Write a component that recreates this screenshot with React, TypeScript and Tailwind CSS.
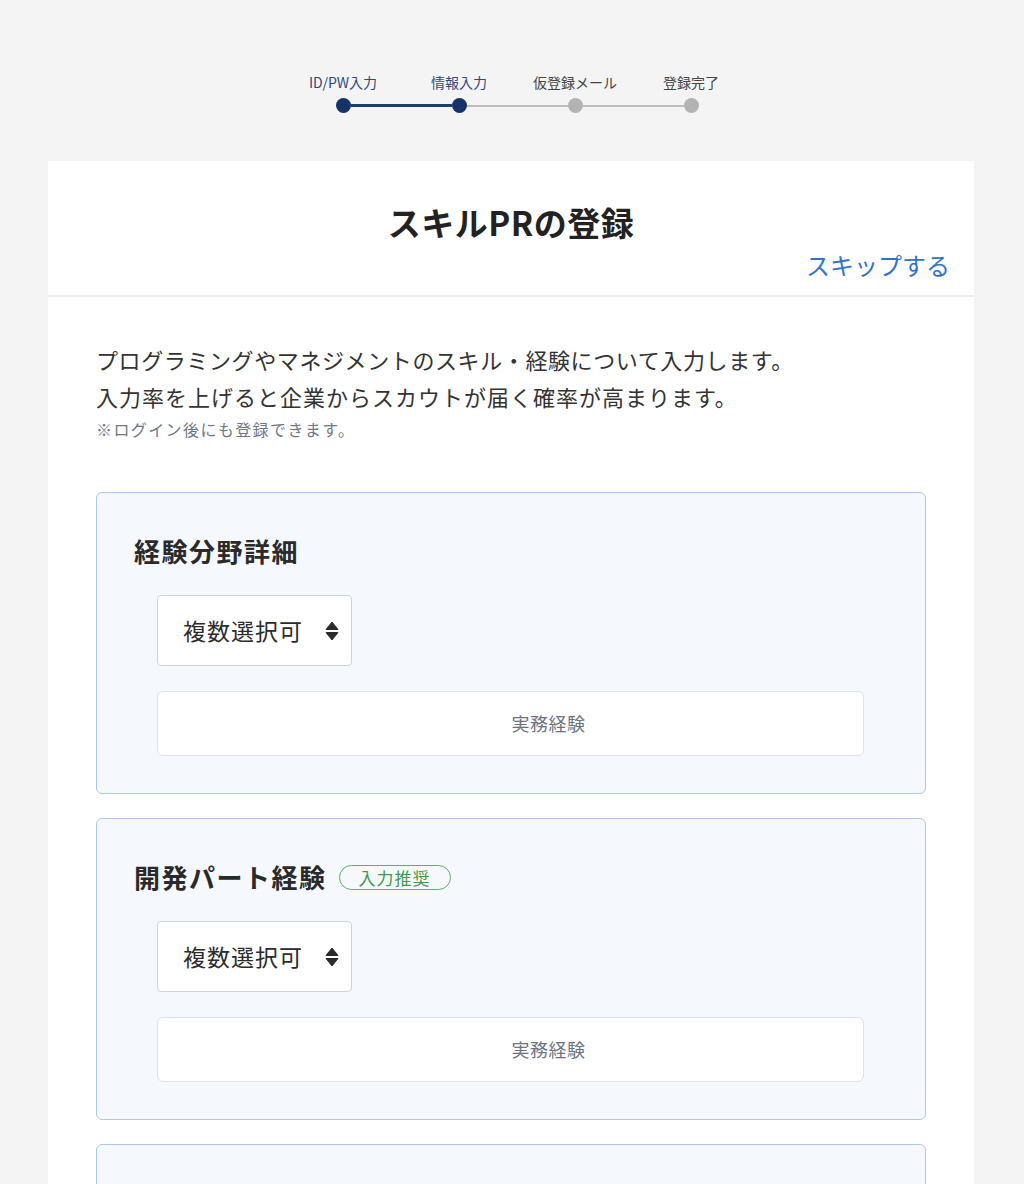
import React from 'react'

const steps = [
  { label: 'ID/PW入力', done: true },
  { label: '情報入力', done: true },
  { label: '仮登録メール', done: false },
  { label: '登録完了', done: false },
]

const SortIcon: React.FC = () => (
  <svg width="14" height="20" viewBox="0 0 14 20" className="text-[#2b2b2b]">
    <path d="M7 1 L13 8.5 L1 8.5 Z" fill="currentColor" strokeLinejoin="round" stroke="currentColor" strokeWidth="1" />
    <path d="M7 19 L13 11.5 L1 11.5 Z" fill="currentColor" strokeLinejoin="round" stroke="currentColor" strokeWidth="1" />
  </svg>
)

const Stepper: React.FC = () => (
  <div className="flex flex-col items-center pt-[72px] pl-[10px]">
    <div className="grid grid-cols-4 w-[464px]">
      {steps.map((s) => (
        <div
          key={s.label}
          className={`text-center text-[14px] leading-[20px] ${s.done ? 'text-[#2d4a7c]' : 'text-[#444]'}`}
        >
          {s.label}
        </div>
      ))}
    </div>
    <div className="flex items-center mt-[6px]">
      {steps.map((s, i) => (
        <React.Fragment key={s.label}>
          <div className={`w-[15px] h-[15px] rounded-full ${s.done ? 'bg-[#15336a]' : 'bg-[#b3b3b3]'}`} />
          {i < steps.length - 1 && (
            <div
              className={`w-[101px] ${i === 0 ? 'h-[3px] bg-[#1d3d73]' : 'h-[2px] bg-[#bdbdbd]'}`}
            />
          )}
        </React.Fragment>
      ))}
    </div>
  </div>
)

const SkillSection: React.FC<{ title: string; recommended?: boolean }> = ({ title, recommended }) => (
  <section className="rounded-[6px] border border-[#aac8ec] bg-[#f5f8fd] pt-[40px] pb-[37px] pl-[37px] pr-[61px]">
    <div className="flex items-center gap-[12px]">
      <h2 className="text-[26px] leading-[36px] tracking-[1.5px] font-bold text-[#2a2a2a]">{title}</h2>
      {recommended && (
        <span className="rounded-full border border-[#5fae68] px-[19px] text-[17px] leading-[23px] tracking-[1px] text-[#3f9a4c]">
          入力推奨
        </span>
      )}
    </div>
    <div className="ml-[23px] mt-[26px]">
      <div className="w-[195px] h-[71px] rounded-[4px] border border-[#cfd3d8] bg-white flex items-center pl-[25px] pr-[12px] justify-between">
        <span className="text-[23px] tracking-[1px] text-[#2b2b2b]">複数選択可</span>
        <SortIcon />
      </div>
      <button
        type="button"
        className="mt-[25px] w-[707px] h-[65px] rounded-[6px] border border-[#d8e3f1] bg-white pl-[76px] text-[18px] tracking-[0.5px] text-[#6c7380]"
      >
        実務経験
      </button>
    </div>
  </section>
)

const App: React.FC = () => {
  return (
    <div
      className="min-h-[1184px] bg-[#f4f4f4]"
      style={{ fontFamily: '"Noto Sans CJK JP", "Noto Sans", sans-serif' }}
    >
      <Stepper />

      <main className="ml-[48px] w-[926px] mt-[48px] bg-white">
        {/* Header */}
        <div className="border-b-2 border-[#ececec] pt-[38px] pb-[14px] px-[24px]">
          <h1 className="text-center text-[33px] leading-[46px] tracking-[0.5px] font-bold text-[#222]">
            スキルPRの登録
          </h1>
          <div className="flex justify-end mt-[4px]">
            <a className="text-[24px] leading-[32px] text-[#2f73cf]">スキップする</a>
          </div>
        </div>

        {/* Body */}
        <div className="px-[48px] pt-[44px] pb-[40px]">
          <p className="text-[22px] leading-[37px] tracking-[0.6px] text-[#333]">
            プログラミングやマネジメントのスキル・経験について入力します。
            <br />
            <span className="tracking-[1px]">入力率を上げると企業からスカウトが届く確率が高まります。</span>
          </p>
          <p className="text-[16px] leading-[22px] tracking-[1.4px] text-[#6d7786] mt-[3px]">
            ※ログイン後にも登録できます。
          </p>

          <div className="mt-[52px] flex flex-col gap-[24px]">
            <SkillSection title="経験分野詳細" />
            <SkillSection title="開発パート経験" recommended />
            <SkillSection title="開発言語経験" />
          </div>
        </div>
      </main>
    </div>
  )
}

export default App
